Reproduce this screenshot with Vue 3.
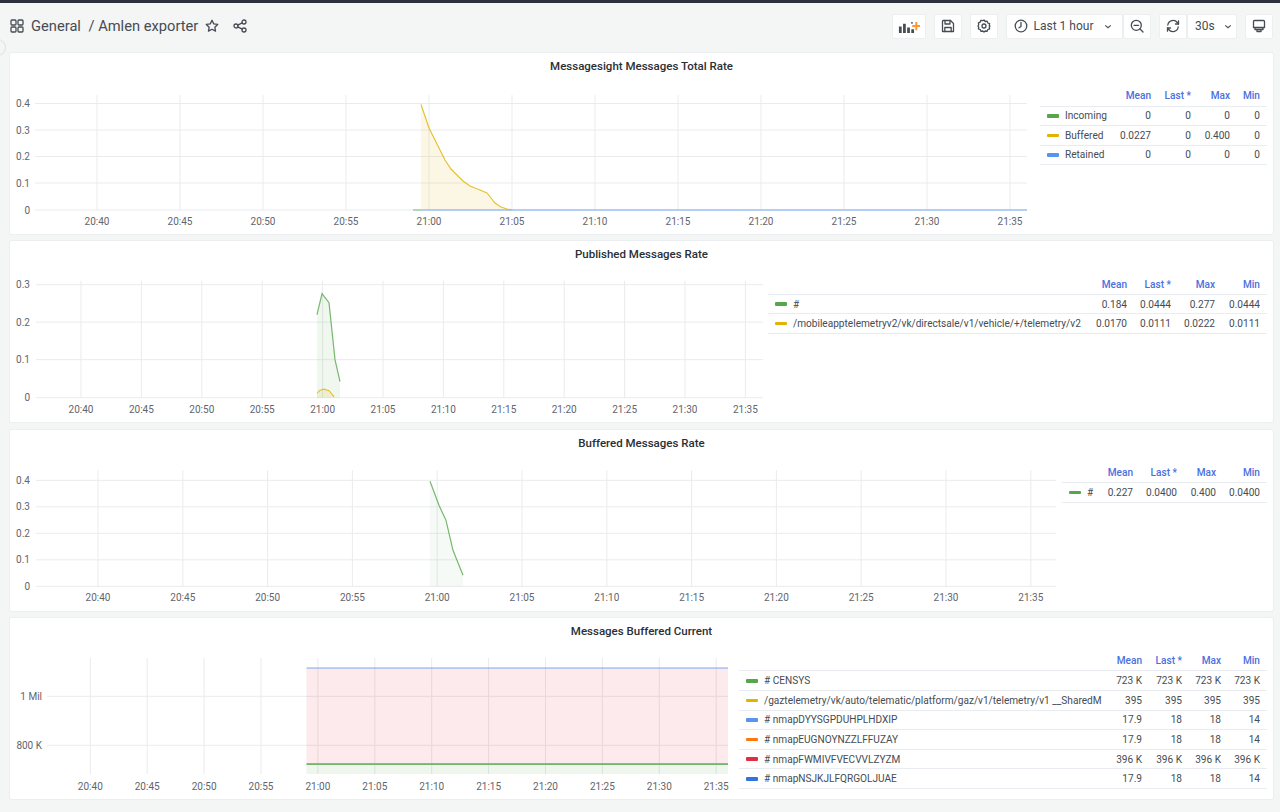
<script setup>
const G = '#56A64B', Y = '#E0B400', B = '#5794F2', O = '#FF780A', R = '#E02F44', D = '#3274D9'
const times = ['20:40','20:45','20:50','20:55','21:00','21:05','21:10','21:15','21:20','21:25','21:30','21:35']
const pts = a => a.map(p => p.join(',')).join(' ')
const area = (a, base) => `${a[0][0]},${base} ${pts(a)} ${a[a.length - 1][0]},${base}`
const xsFrom = (x0, step) => times.map((t, i) => ({ t, x: x0 + step * i }))

const yellow1 = [[421,104.5],[429,128],[437,144],[445,160],[451,169],[457,175],[463,181],[470,186],[480,190],[487,193],[491,198],[495,203],[501,207],[507,209],[512,210]]
const green2 = [[317,315],[322,294],[329,303],[335,360],[340,382]]
const yellow2 = [[317,393.5],[320,390.5],[324,389.5],[329,391],[334,397]]
const green3 = [[430,481],[439,505],[446,520],[453,550],[463,575]]

const panels = [
  {
    title: 'Messagesight Messages Total Rate', h: 181, legendLeft: 1040, cols: [118,40,39,30], x0: 35, x1: 1027, vTop: 95, vBottom: 210, labelY: 221, yRight: 30,
    xs: xsFrom(97, 83), ys: [['0.4',103.5],['0.3',130],['0.2',156.5],['0.1',183],['0',210]],
    fills: [{ points: area(yellow1, 210), color: Y, o: .1 }],
    lines: [{ points: '413,210 421,210', color: G }, { points: '421,210 1027,210', color: B }, { points: pts(yellow1), color: Y }],
    rows: [
      { c: G, n: 'Incoming', v: ['0','0','0','0'] },
      { c: Y, n: 'Buffered', v: ['0.0227','0','0.400','0'] },
      { c: B, n: 'Retained', v: ['0','0','0','0'] },
    ],
  },
  {
    title: 'Published Messages Rate', h: 181, legendLeft: 768, cols: [366,44,44,45], x0: 36, x1: 763, vTop: 281, vBottom: 398, labelY: 409, yRight: 30,
    xs: xsFrom(81, 60.4), ys: [['0.3',285],['0.2',322.5],['0.1',360],['0',398]],
    fills: [{ points: area(green2, 398), color: G, o: .09 }, { points: area(yellow2, 398), color: Y, o: .12 }],
    lines: [{ points: pts(green2), color: G }, { points: pts(yellow2), color: Y }],
    rows: [
      { c: G, n: '#', v: ['0.184','0.0444','0.277','0.0444'] },
      { c: Y, n: '/mobileapptelemetryv2/vk/directsale/v1/vehicle/+/telemetry/v2', v: ['0.0170','0.0111','0.0222','0.0111'] },
    ],
  },
  {
    title: 'Buffered Messages Rate', h: 181, legendLeft: 1062, cols: [78,44,39,44], x0: 36, x1: 1056, vTop: 470, vBottom: 586, labelY: 597, yRight: 30,
    xs: xsFrom(98, 84.8), ys: [['0.4',480],['0.3',506.5],['0.2',533],['0.1',559.5],['0',586]],
    fills: [{ points: area(green3, 586), color: G, o: .05 }],
    lines: [{ points: pts(green3), color: G }],
    rows: [{ c: G, n: '#', v: ['0.227','0.0400','0.400','0.0400'] }],
  },
  {
    title: 'Messages Buffered Current', h: 181, legendLeft: 739, cols: [410,40,39,39], x0: 47, x1: 728, vTop: 658, vBottom: 774, labelY: 786, yRight: 42,
    xs: xsFrom(90.3, 56.9), ys: [['1 Mil',696.3],['800 K',745.3]],
    fills: [{ points: '306.5,668 728,668 728,764 306.5,764', color: R, o: .1 }, { points: '306.5,764 728,764 728,774 306.5,774', color: G, o: .1 }],
    lines: [{ points: '306.5,668 728,668', color: B }, { points: '306.5,763.5 728,763.5', color: O }, { points: '306.5,764.5 728,764.5', color: G }],
    rows: [
      { c: G, n: '# CENSYS', v: ['723 K','723 K','723 K','723 K'] },
      { c: Y, n: '/gaztelemetry/vk/auto/telematic/platform/gaz/v1/telemetry/v1 __SharedM', v: ['395','395','395','395'] },
      { c: B, n: '# nmapDYYSGPDUHPLHDXIP', v: ['17.9','18','18','14'] },
      { c: O, n: '# nmapEUGNOYNZZLFFUZAY', v: ['17.9','18','18','14'] },
      { c: R, n: '# nmapFWMIVFVECVVLZYZM', v: ['396 K','396 K','396 K','396 K'] },
      { c: D, n: '# nmapNSJKJLFQRGOLJUAE', v: ['17.9','18','18','14'] },
    ],
  },
]
const tops = [53, 241.33, 429.67, 618]
const heads = ['Mean', 'Last *', 'Max', 'Min']
</script>

<template>
  <div class="page">
    <div class="strip"></div>
    <span class="toggle"></span>
    <header class="bar">
      <svg class="ico grid" viewBox="0 0 14 14"><rect x="1" y="1" width="5" height="5" rx="1"/><rect x="8" y="1" width="5" height="5" rx="1"/><rect x="1" y="8" width="5" height="5" rx="1"/><rect x="8" y="8" width="5" height="5" rx="1"/></svg>
      <span class="crumb first">General</span>
      <span class="crumb">/ Amlen exporter</span>
      <svg class="ico star" viewBox="0 0 14 14"><path d="M7 1.300l1.750 3.600 3.950.550-2.870 2.780.690 3.950L7 10.300l-3.520 1.880.690-3.950L1.300 5.450l3.950-.550z"/></svg>
      <svg class="ico share" viewBox="0 0 14 14"><circle cx="3" cy="7" r="2"/><circle cx="11" cy="3" r="2"/><circle cx="11" cy="11" r="2"/><path d="M4.800 6.100l4.400-2.200M4.800 7.900l4.400 2.200"/></svg>
      <div class="tools">
        <button class="btn addp">
          <svg viewBox="0 0 24 16" class="svgi"><path class="solid" d="M1 8h3v7H1zM5.500 5h3v10h-3zM10 9h3v6h-3zM14.500 3h1.500v2h-1.500zM14.500 11h3v4h-3z"/><path class="plus" d="M20 3v9M15.500 7.500h9"/></svg>
        </button>
        <button class="btn sq">
          <svg viewBox="0 0 14 14" class="ico"><path d="M2 1.500h7.500L12.500 4.500V12.500H1.500V2z"/><path d="M4 1.500V5h5V1.500M3.800 12.500V8.500h6.400v4"/></svg>
        </button>
        <button class="btn sq">
          <svg viewBox="0 0 14 14" class="ico"><circle cx="7" cy="7" r="2"/><path d="M7 1l1.200 1.500 1.900-.3.700 1.800 1.800.700-.3 1.900L13 7l-.7 1.200.3 1.600-1.800.700-.7 1.800-1.900-.3L7 13l-1.200-1-1.900.3-.7-1.800-1.800-.7.300-1.600L1 7l.7-1.300-.3-1.900 1.800-.7.700-1.800 1.900.3z"/></svg>
        </button>
        <div class="joined">
          <button class="btn time">
            <svg viewBox="0 0 14 14" class="ico"><circle cx="7" cy="7" r="5.800"/><path d="M7 3.500V7.500L5 8.800"/></svg>
            <span class="lbl">Last 1 hour</span>
            <svg viewBox="0 0 10 6" class="chev"><path d="M1.500 1.500L5 4.500l3.500-3"/></svg>
          </button>
          <button class="btn zoomo">
            <svg viewBox="0 0 14 14" class="ico"><circle cx="6.300" cy="6.300" r="5"/><path d="M10 10l3 3M4 6.300h4.600"/></svg>
          </button>
        </div>
        <div class="joined">
          <button class="btn refresh">
            <svg viewBox="0 0 14 14" class="ico"><path d="M1.800 6A5.300 5.300 0 0 1 11.300 3.500L12.500 5M12.200 8A5.300 5.300 0 0 1 2.700 10.500L1.500 9"/><path d="M12.500 1.800V5H9.500M1.500 12.200V9H4.500"/></svg>
          </button>
          <button class="btn rate">
            <span class="lbl">30s</span>
            <svg viewBox="0 0 10 6" class="chev"><path d="M1.500 1.500L5 4.500l3.500-3"/></svg>
          </button>
        </div>
        <button class="btn sq">
          <svg viewBox="0 0 14 14" class="ico"><path d="M2.500 1.500h9a1 1 0 0 1 1 1v6h-11v-6a1 1 0 0 1 1-1zM3 8.500v2h8v-2M5 10.500V12.500h4V10.500"/></svg>
        </button>
      </div>
    </header>

    <main class="panels">
      <section v-for="(p, i) in panels" :key="p.title" class="panel">
        <h2 class="title">{{ p.title }}</h2>
        <div class="body">
          <svg class="chart" :width="p.legendLeft - 10" height="147" :viewBox="`10 ${tops[i] + 33} ${p.legendLeft - 10} 147`">
            <line v-for="y in p.ys" :key="y[0]" class="gl" :x1="p.x0" :x2="p.x1" :y1="y[1]" :y2="y[1]" />
            <line v-for="x in p.xs" :key="x.t" class="gl" :x1="x.x" :x2="x.x" :y1="p.vTop" :y2="p.vBottom" />
            <polygon v-for="(f, k) in p.fills" :key="k" :points="f.points" :fill="f.color" :fill-opacity="f.o" />
            <polyline v-for="(l, k) in p.lines" :key="k" class="ln" :points="l.points" :stroke="l.color" />
            <text v-for="y in p.ys" :key="y[0]" class="tick" text-anchor="end" :x="p.yRight" :y="y[1] + 3.5">{{ y[0] }}</text>
            <text v-for="x in p.xs" :key="x.t" class="tick" text-anchor="middle" :x="x.x" :y="p.labelY + 4">{{ x.t }}</text>
          </svg>
          <table class="legend">
            <colgroup>
              <col v-for="(w, k) in p.cols" :key="k" :style="{ width: w + 'px' }" />
            </colgroup>
            <thead>
              <tr>
                <th v-for="h in heads" :key="h">{{ h }}</th>
              </tr>
            </thead>
            <tbody>
              <tr v-for="r in p.rows" :key="r.n">
                <td class="name">
                  <div class="namecell">
                    <span class="sw" :style="{ background: r.c }"></span>
                    <span class="nm">{{ r.n }}</span>
                    <span class="val">{{ r.v[0] }}</span>
                  </div>
                </td>
                <td v-for="(v, k) in r.v.slice(1)" :key="k">{{ v }}</td>
              </tr>
            </tbody>
          </table>
        </div>
      </section>
    </main>
  </div>
</template>

<style>
html, body { margin: 0; background: #f4f5f5; }
</style>

<style scoped>
.page {
  position: relative;
  width: 1280px;
  height: 812px;
  overflow: hidden;
  background: #f4f5f5;
  font-family: Roboto, "Liberation Sans", sans-serif;
  color: #464c54;
}
.strip { height: 3px; background: #2c303c; }
.toggle {
  position: absolute;
  left: -11px;
  top: 39px;
  width: 15px;
  height: 15px;
  border-radius: 50%;
  border: 1px solid #dcdee1;
  background: #f4f5f5;
}
.bar {
  display: flex;
  align-items: center;
  height: 46px;
  margin-bottom: 4px;
  padding: 0 7px 0 10px;
  box-sizing: border-box;
}
.ico { width: 14px; height: 14px; fill: none; stroke: #464c54; stroke-width: 1.3; stroke-linejoin: round; stroke-linecap: round; flex: none; }
.grid { margin-right: 7px; }
.crumb { font-size: 14.7px; line-height: 20px; color: #464c54; white-space: nowrap; }
.first { margin-right: 7.5px; }
.star { margin-left: 7px; }
.share { margin-left: 14px; }
.tools { margin-left: auto; display: flex; gap: 8px; align-items: center; }
.joined { display: flex; gap: 0; }
.btn {
  height: 25px;
  padding: 0;
  display: flex;
  align-items: center;
  justify-content: center;
  background: #fff;
  border: 1px solid #eceef0;
  border-radius: 2px;
  color: #464c54;
  font: 400 12px Roboto, "Liberation Sans", sans-serif;
  box-sizing: border-box;
}
.sq { width: 28px; }
.addp { width: 34px; }
.svgi { width: 22px; height: 15px; }
.solid { fill: #464c54; }
.plus { stroke: #ff9830; stroke-width: 2.2; fill: none; }
.time { width: 117px; justify-content: flex-start; padding-left: 7px; }
.time .lbl { margin-left: 6px; }
.time .chev { margin-left: 11px; }
.zoomo { width: 28px; }
.refresh { width: 28.5px; }
.rate { width: 50px; justify-content: flex-start; padding-left: 7px; }
.rate .chev { margin-left: 9px; }
.chev { width: 8px; height: 5px; fill: none; stroke: #464c54; stroke-width: 1.3; }
.panels {
  display: flex;
  flex-direction: column;
  gap: 7.33px;
  margin-left: 10px;
  width: 1263px;
}
.panel {
  height: 181px;
  box-sizing: border-box;
  background: #fff;
  box-shadow: 0 0 0 1px #eceef1;
  border-radius: 2px;
  overflow: hidden;
}
.title {
  margin: 0;
  height: 33px;
  padding-top: 5px;
  box-sizing: border-box;
  text-align: center;
  font-size: 11.5px;
  font-weight: 500;
  line-height: 16px;
  color: #2a2f35;
}
.body { display: flex; justify-content: space-between; padding-right: 6px; }
.chart { display: block; flex: none; }
.gl { stroke: #e9ebed; stroke-width: 1; }
.ln { fill: none; stroke-width: 1.2; stroke-opacity: .8; }
.tick { font-size: 10px; fill: #5f656d; font-family: Roboto, "Liberation Sans", sans-serif; }
.legend {
  border-collapse: collapse;
  table-layout: fixed;
  font-size: 10.1px;
  align-self: flex-start;
  margin-left: auto;
}
th {
  height: 20px;
  padding: 0 7px 0 0;
  text-align: right;
  font-weight: 500;
  color: #4a6fe0;
  border-bottom: 1px solid #e9edf2;
  box-sizing: border-box;
}
td {
  height: 19.6px;
  padding: 0 7px 0 0;
  text-align: right;
  border-bottom: 1px solid #e9edf2;
  box-sizing: border-box;
  color: #464c54;
  white-space: nowrap;
}
.namecell { display: flex; align-items: center; }
.sw { width: 12px; height: 3.5px; border-radius: 1px; margin-left: 7px; flex: none; }
.nm { margin-left: 6px; text-align: left; white-space: nowrap; }
.val { margin-left: auto; }
</style>
